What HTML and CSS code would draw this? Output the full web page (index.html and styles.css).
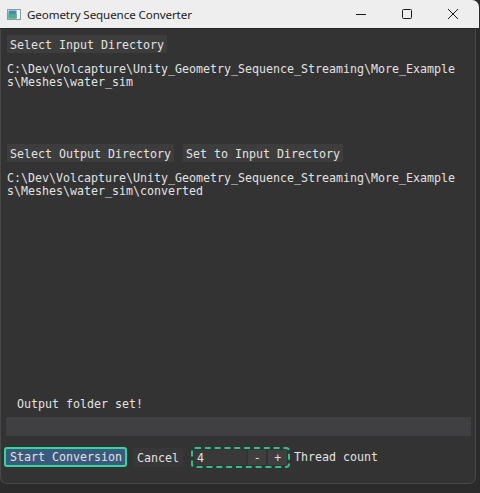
FILE: index.html
```html
<!DOCTYPE html>
<html>
<head>
<meta charset="utf-8">
<link rel="stylesheet" href="styles.css">
</head>
<body>
<div class="titlebar">
  <svg class="appicon" width="14" height="11" viewBox="0 0 14 11">
    <rect x="0.5" y="0.5" width="13" height="10" fill="#e8eef0" stroke="#8a9aa0"/>
    <rect x="1.5" y="1.5" width="8" height="8" fill="#3d8fb0"/>
    <rect x="1.5" y="5" width="8" height="4.5" fill="#4fae88"/>
    <rect x="10" y="1.5" width="3" height="8" fill="#f6f6f6"/>
  </svg>
  <span class="title">Geometry Sequence Converter</span>
  <div class="controls">
    <svg width="12" height="12" viewBox="0 0 12 12" class="ctl-min"><path d="M1 6.5h10" stroke="#1a1a1a" stroke-width="1"/></svg>
    <svg width="12" height="12" viewBox="0 0 12 12" class="ctl-max"><rect x="1.5" y="1.5" width="9" height="9" rx="1" fill="none" stroke="#1a1a1a" stroke-width="1"/></svg>
    <svg width="12" height="12" viewBox="0 0 12 12" class="ctl-close"><path d="M1 1L11 11M11 1L1 11" stroke="#1a1a1a" stroke-width="1"/></svg>
  </div>
</div>
<div class="panel">
  <div class="row first">
    <div class="btn">Select Input Directory</div>
  </div>
  <div class="path p1">C:\Dev\Volcapture\Unity_Geometry_Sequence_Streaming\More_Example<br>s\Meshes\water_sim</div>
  <div class="row second">
    <div class="btn">Select Output Directory</div>
    <div class="btn">Set to Input Directory</div>
  </div>
  <div class="path p2">C:\Dev\Volcapture\Unity_Geometry_Sequence_Streaming\More_Example<br>s\Meshes\water_sim\converted</div>
  <div class="status">Output folder set!</div>
  <div class="logbox"></div>
  <div class="bottom">
    <div class="btn start">Start Conversion</div>
    <div class="btn cancel">Cancel</div>
    <div class="stepper">
      <div class="field">4</div>
      <div class="step">-</div>
      <div class="step">+</div>
    </div>
    <span class="label">Thread count</span>
  </div>
</div>
</body>
</html>
```

FILE: styles.css
```css
html, body {
  margin: 0;
  padding: 0;
}
body {
  width: 480px;
  height: 493px;
  background: #2b2b2b;
  overflow: hidden;
  font-family: "DejaVu Sans Mono", "Liberation Mono", monospace;
  font-size: 11.63px;
  line-height: 13px;
  color: #e2e2e2;
}
.titlebar {
  height: 28px;
  background: #eeeeee;
  border-bottom: 1px solid #262626;
  border-top-right-radius: 7px;
  width: 479px;
  display: flex;
  align-items: center;
  font-family: "Noto Sans", "Open Sans", sans-serif;
  font-size: 11.6px;
  color: #1b1b1b;
}
.appicon {
  margin-left: 7px;
  margin-top: 1px;
}
.title {
  margin-left: 6px;
  letter-spacing: -0.1px;
}
.controls {
  margin-left: auto;
  display: flex;
  align-items: center;
}
.ctl-min { margin-right: 34px; }
.ctl-max { margin-right: 34px; }
.ctl-close { margin-right: 20px; }
.panel {
  box-sizing: border-box;
  width: 476px;
  height: 455px;
  background: #333333;
  border: 1px solid #484848;
  border-top: none;
  border-radius: 0 0 7px 7px;
  padding: 6px 0 0 6px;
  display: flex;
  flex-direction: column;
}
.row {
  display: flex;
  gap: 9px;
}
.btn {
  background: #3d3d3d;
  padding: 4px 3px 1px 3px;
  height: 13px;
  white-space: pre;
}
.path {
  white-space: nowrap;
}
.p1 { margin-top: 10px; }
.second { margin-top: 55px; }
.p2 { margin-top: 10px; }
.status {
  margin-top: auto;
  margin-left: 10px;
}
.logbox {
  margin-top: 6px;
  margin-left: -1px;
  width: 465px;
  height: 19px;
  background: #404043;
}
.bottom {
  display: flex;
  align-items: center;
  margin-top: 11px;
  margin-bottom: 16px;
  height: 20px;
}
.btn.start {
  margin-left: -3px;
  background: #3a5a7c;
  border: 2px solid #2fd7a2;
  border-radius: 3px;
  padding: 2px 3px 1px 4px;
  height: 13px;
}
.btn.cancel {
  margin-left: 6px;
  padding: 4px 4px 2px 4px;
  background: #383838;
}
.stepper {
  margin-left: 8px;
  box-sizing: border-box;
  width: 99px;
  height: 21px;
  border: 2px dashed #2fbf8f;
  border-radius: 4px;
  display: flex;
  align-items: stretch;
  padding: 1px;
  gap: 2px;
}
.field {
  width: 49px;
  background: #393939;
  padding: 2px 0 0 3px;
}
.step {
  flex: 1;
  background: #3f3f3f;
  text-align: center;
  padding-top: 2px;
}
.label {
  margin-left: 4px;
}
```
